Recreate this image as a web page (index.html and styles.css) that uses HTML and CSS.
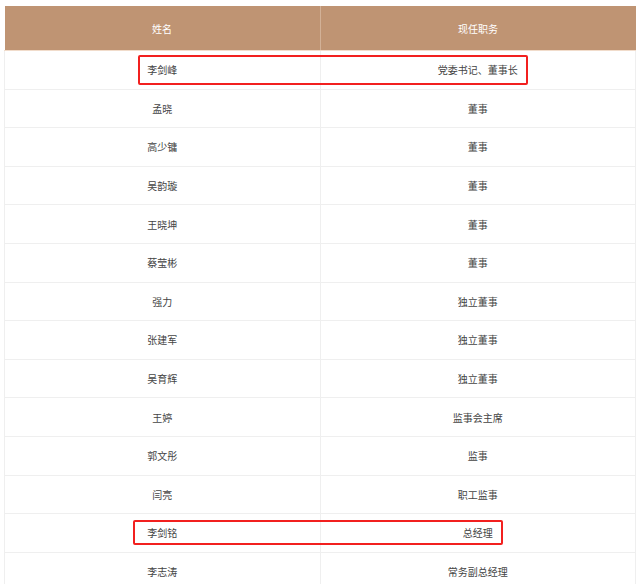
FILE: index.html
```html
<!DOCTYPE html>
<html lang="zh-CN">
<head>
<meta charset="utf-8">
<title>领导成员</title>
<link rel="stylesheet" href="styles.css">
</head>
<body>
<div class="wrap">
  <table class="roster">
    <thead>
      <tr><th>姓名</th><th>现任职务</th></tr>
    </thead>
    <tbody>
      <tr><td>李剑峰</td><td>党委书记、董事长</td></tr>
      <tr><td>孟晓</td><td>董事</td></tr>
      <tr><td>高少镛</td><td>董事</td></tr>
      <tr><td>吴韵璇</td><td>董事</td></tr>
      <tr><td>王晓坤</td><td>董事</td></tr>
      <tr><td>蔡莹彬</td><td>董事</td></tr>
      <tr><td>强力</td><td>独立董事</td></tr>
      <tr><td>张建军</td><td>独立董事</td></tr>
      <tr><td>吴育辉</td><td>独立董事</td></tr>
      <tr><td>王婷</td><td>监事会主席</td></tr>
      <tr><td>郭文彤</td><td>监事</td></tr>
      <tr><td>闫亮</td><td>职工监事</td></tr>
      <tr><td>李剑铭</td><td>总经理</td></tr>
      <tr><td>李志涛</td><td>常务副总经理</td></tr>
    </tbody>
  </table>
  <div class="mark mark-1"></div>
  <div class="mark mark-2"></div>
</div>
</body>
</html>
```
FILE: styles.css
```css
html, body {
  margin: 0;
  padding: 0;
  background: #fff;
}
body {
  font-family: "Noto Sans CJK SC", "Noto Sans", sans-serif;
  overflow: hidden;
}
.wrap {
  position: relative;
  padding: 6px 5px 0 4px;
}
.roster {
  width: 632px;
  border-collapse: collapse;
  table-layout: fixed;
  font-size: 10px;
}
.roster th {
  background: #bf9473;
  color: #fff;
  font-weight: normal;
  height: 44px;
  padding: 0;
  border-bottom: 1px solid #f1dccb;
  border-left: 1px solid #d2b197;
  text-align: center;
}
.roster th:first-child {
  border-left: none;
}
.roster td {
  height: 38.6px;
  padding: 0;
  text-align: center;
  color: #444;
  border-bottom: 1px solid #efefef;
  border-left: 1px solid #efefef;
  border-right: 1px solid #efefef;
  box-sizing: border-box;
}
.mark {
  position: absolute;
  border: 2px solid #f2201f;
  border-radius: 2px;
  box-sizing: border-box;
}
.mark-1 {
  left: 138px;
  top: 55px;
  width: 390px;
  height: 30px;
}
.mark-2 {
  left: 133px;
  top: 520px;
  width: 370px;
  height: 25px;
}
```
